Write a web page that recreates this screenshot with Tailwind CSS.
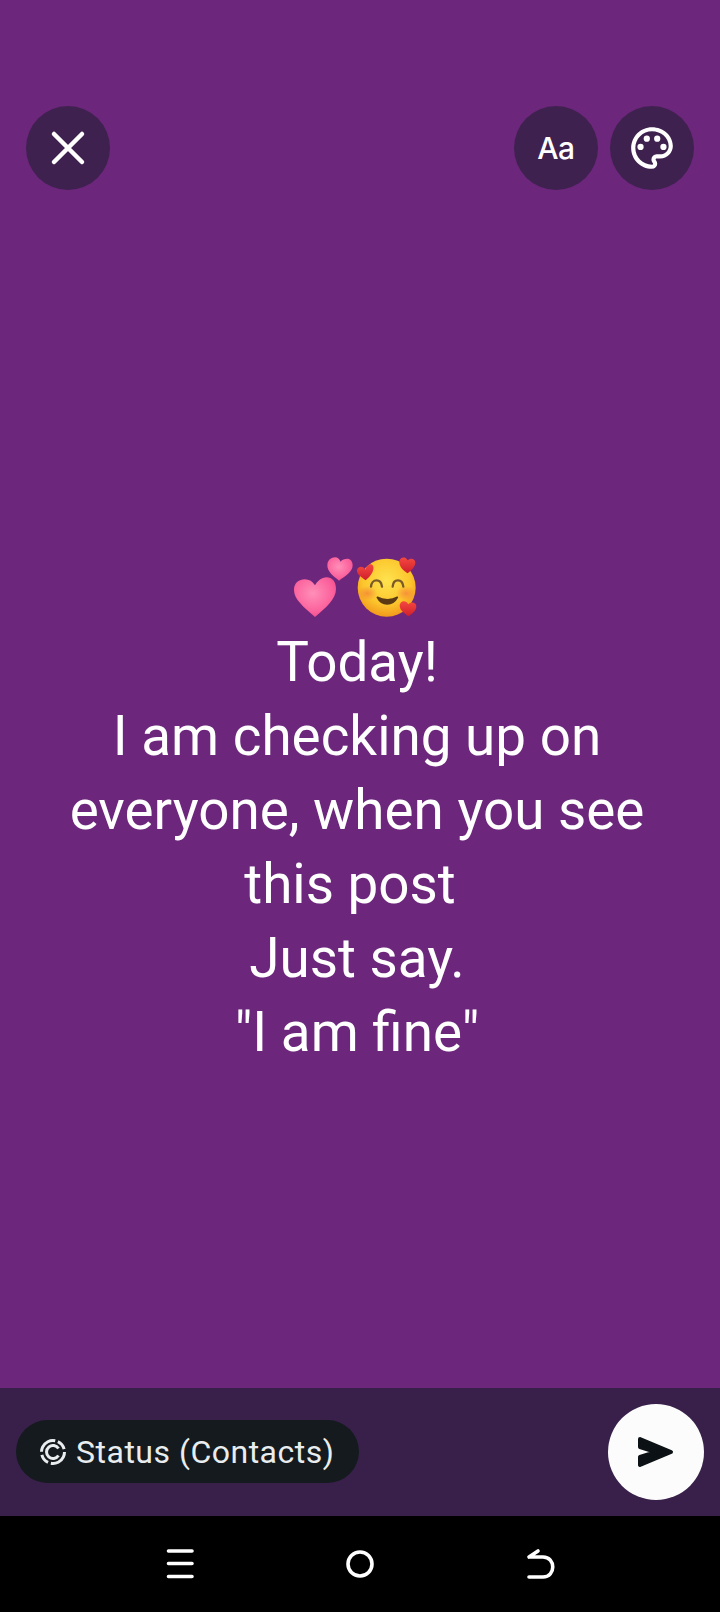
<!DOCTYPE html>
<html>
<head>
<meta charset="utf-8">
<script src="https://cdn.jsdelivr.net/npm/@tailwindcss/browser@4"></script>
</head>
<body class="m-0">
<div class="w-[720px] h-[1612px] flex flex-col overflow-hidden bg-[#6c267b] font-['Roboto',sans-serif]">
  <main class="h-[1388px] flex flex-col">
    <header class="flex justify-between pt-[106px] pl-[26px] pr-[26px]">
      <button class="w-[84px] h-[84px] rounded-full bg-[#3f2150] flex items-center justify-center">
        <svg width="84" height="84" viewBox="0 0 84 84"><path d="M28 28L56 56M56 28L28 56" stroke="#fff" stroke-width="4.5" stroke-linecap="round" fill="none"/></svg>
      </button>
      <div class="flex gap-[12px]">
        <button class="w-[84px] h-[84px] rounded-full bg-[#3f2150] flex items-center justify-center text-white text-[30px] font-medium font-['Inter',sans-serif] tracking-[-0.5px]">Aa</button>
        <button class="w-[84px] h-[84px] rounded-full bg-[#3f2150] flex items-center justify-center">
          <svg width="50" height="50" viewBox="0 0 24 24" fill="#fff"><path d="M12 22C6.49 22 2 17.51 2 12S6.49 2 12 2s10 4.04 10 9c0 3.31-2.69 6-6 6h-1.77c-.28 0-.5.22-.5.5 0 .12.05.23.13.33.41.47.64 1.06.64 1.67A2.5 2.5 0 0 1 12 22zm0-18c-4.41 0-8 3.59-8 8s3.59 8 8 8c.28 0 .5-.22.5-.5a.54.54 0 0 0-.14-.35c-.41-.46-.63-1.05-.63-1.65a2.5 2.5 0 0 1 2.5-2.5H16c2.21 0 4-1.79 4-4 0-3.86-3.59-7-8-7z"/><circle cx="6.5" cy="11.5" r="1.5"/><circle cx="9.5" cy="7.5" r="1.5"/><circle cx="14.5" cy="7.5" r="1.5"/><circle cx="17.5" cy="11.5" r="1.5"/></svg>
        </button>
      </div>
    </header>
    <div class="mt-[350px] flex flex-col items-center">
      <svg class="ml-[-11px]" width="170" height="90" viewBox="0 0 510 270">
        <defs>
          <radialGradient id="hp" cx="45%" cy="40%" r="70%"><stop offset="0" stop-color="#ff8fb8"/><stop offset="0.7" stop-color="#fb5f9b"/><stop offset="1" stop-color="#e84386"/></radialGradient>
          <radialGradient id="face" cx="50%" cy="38%" r="62%"><stop offset="0" stop-color="#fee34f"/><stop offset="0.65" stop-color="#fcc62d"/><stop offset="1" stop-color="#f29a1c"/></radialGradient>
          <radialGradient id="blush" cx="50%" cy="50%" r="50%"><stop offset="0" stop-color="#f5843a" stop-opacity="0.8"/><stop offset="1" stop-color="#f5843a" stop-opacity="0"/></radialGradient>
          <linearGradient id="rh" x1="0" y1="0" x2="0" y2="1"><stop offset="0" stop-color="#f5483f"/><stop offset="1" stop-color="#cf1f2c"/></linearGradient>
        </defs>
        <path d="M135 231C100 200 72 178 72 150C72 128 88 118 104 118C118 118 128 124 135 136C142 124 154 112 170 112C186 112 198 124 198 146C198 178 168 202 135 231Z" fill="url(#hp)"/>
        <path d="M207 122C190 108 172 96 172 76C172 60 184 52 195 52C203 52 209 58 212 65C216 58 224 56 232 56C241 56 248 64 248 76C248 96 226 108 207 122Z" fill="url(#hp)"/>
        <circle cx="350" cy="143" r="87" fill="url(#face)"/>
        <ellipse cx="292" cy="160" rx="30" ry="22" fill="url(#blush)"/>
        <ellipse cx="408" cy="160" rx="30" ry="22" fill="url(#blush)"/>
        <path d="M303 140C305 115 333 115 336 140" stroke="#7a5a28" stroke-width="7" fill="none" stroke-linecap="round"/>
        <path d="M368 140C370 115 397 115 400 140" stroke="#7a5a28" stroke-width="7" fill="none" stroke-linecap="round"/>
        <path d="M322 172C335 198 368 198 382 172C365 182 340 182 322 172Z" fill="#5a3a14" stroke="#5a3a14" stroke-width="5" stroke-linejoin="round"/>
        <path d="M287 121C272 110 260 104 261 91C262 82 272 78 279 82C283 84 285 87 286 89C289 79 298 70 306 74C313 78 311 90 306 99C301 108 295 114 287 121Z" fill="url(#rh)"/>
        <path d="M412 100C400 90 388 82 388 66C388 55 398 50 407 54C410 56 412 59 413 61C418 56 426 54 432 59C439 65 436 75 430 83C425 90 419 95 412 100Z" fill="url(#rh)"/>
        <path d="M415 229C404 219 390 213 389 197C389 186 400 180 409 186C412 188 414 191 415 193C420 187 430 185 436 191C442 198 438 209 431 216C427 221 421 225 415 229Z" fill="url(#rh)"/>
      </svg>
      <p class="mt-[-5px] w-full pr-[6px] text-center text-white text-[54.8px] leading-[74px]">Today!<br>I am checking up on<br>everyone, when you see<br><span class="pr-[14px]">this post</span><br>Just say.<br>"I am fine"</p>
    </div>
  </main>
  <section class="h-[128px] bg-[#38204a] flex items-center justify-between pl-[16px] pr-[16px]">
    <div class="h-[63px] w-[343px] rounded-full bg-[#141a1d] flex items-center pl-[23px] gap-[9px] text-[#e9edef] text-[32px] mt-[-1px]">
      <svg width="28" height="28" viewBox="0 0 28 28" fill="none" stroke="#e9edef" stroke-width="3"><circle cx="14" cy="14" r="11.500" stroke-dasharray="10 3 20 3 10 3 20 3" transform="rotate(-65 14 14)"/><path d="M19.500 10.500A6.500 6.500 0 1 0 19.500 17.500"/></svg>
      <span class="tracking-[0.5px]">Status (Contacts)</span>
    </div>
    <button class="w-[96px] h-[96px] rounded-full bg-[#fcfcfc] flex items-center justify-center">
      <svg width="96" height="96" viewBox="0 0 96 96"><path d="M32 35L63 48L32 61V53L48 48L32 43Z" fill="#0b1114" stroke="#0b1114" stroke-width="4" stroke-linejoin="round"/></svg>
    </button>
  </section>
  <nav class="h-[96px] bg-black flex items-center justify-center gap-[140px]">
    <svg width="40" height="40" viewBox="0 0 40 40" fill="none" stroke="#fff" stroke-width="3.6" stroke-linecap="round"><path d="M8.500 7H32M8.500 19.500H32M8.500 32.500H32"/></svg>
    <svg width="40" height="40" viewBox="0 0 40 40" fill="none" stroke="#fff" stroke-width="3.6"><circle cx="20" cy="20" r="12"/></svg>
    <svg width="40" height="40" viewBox="0 0 40 40" fill="none" stroke="#fff" stroke-width="3.6" stroke-linecap="round" stroke-linejoin="round"><path d="M9 13H23C36 13 36 33 23 33H9M18 7L9 13"/></svg>
  </nav>
</div>
</body>
</html>
